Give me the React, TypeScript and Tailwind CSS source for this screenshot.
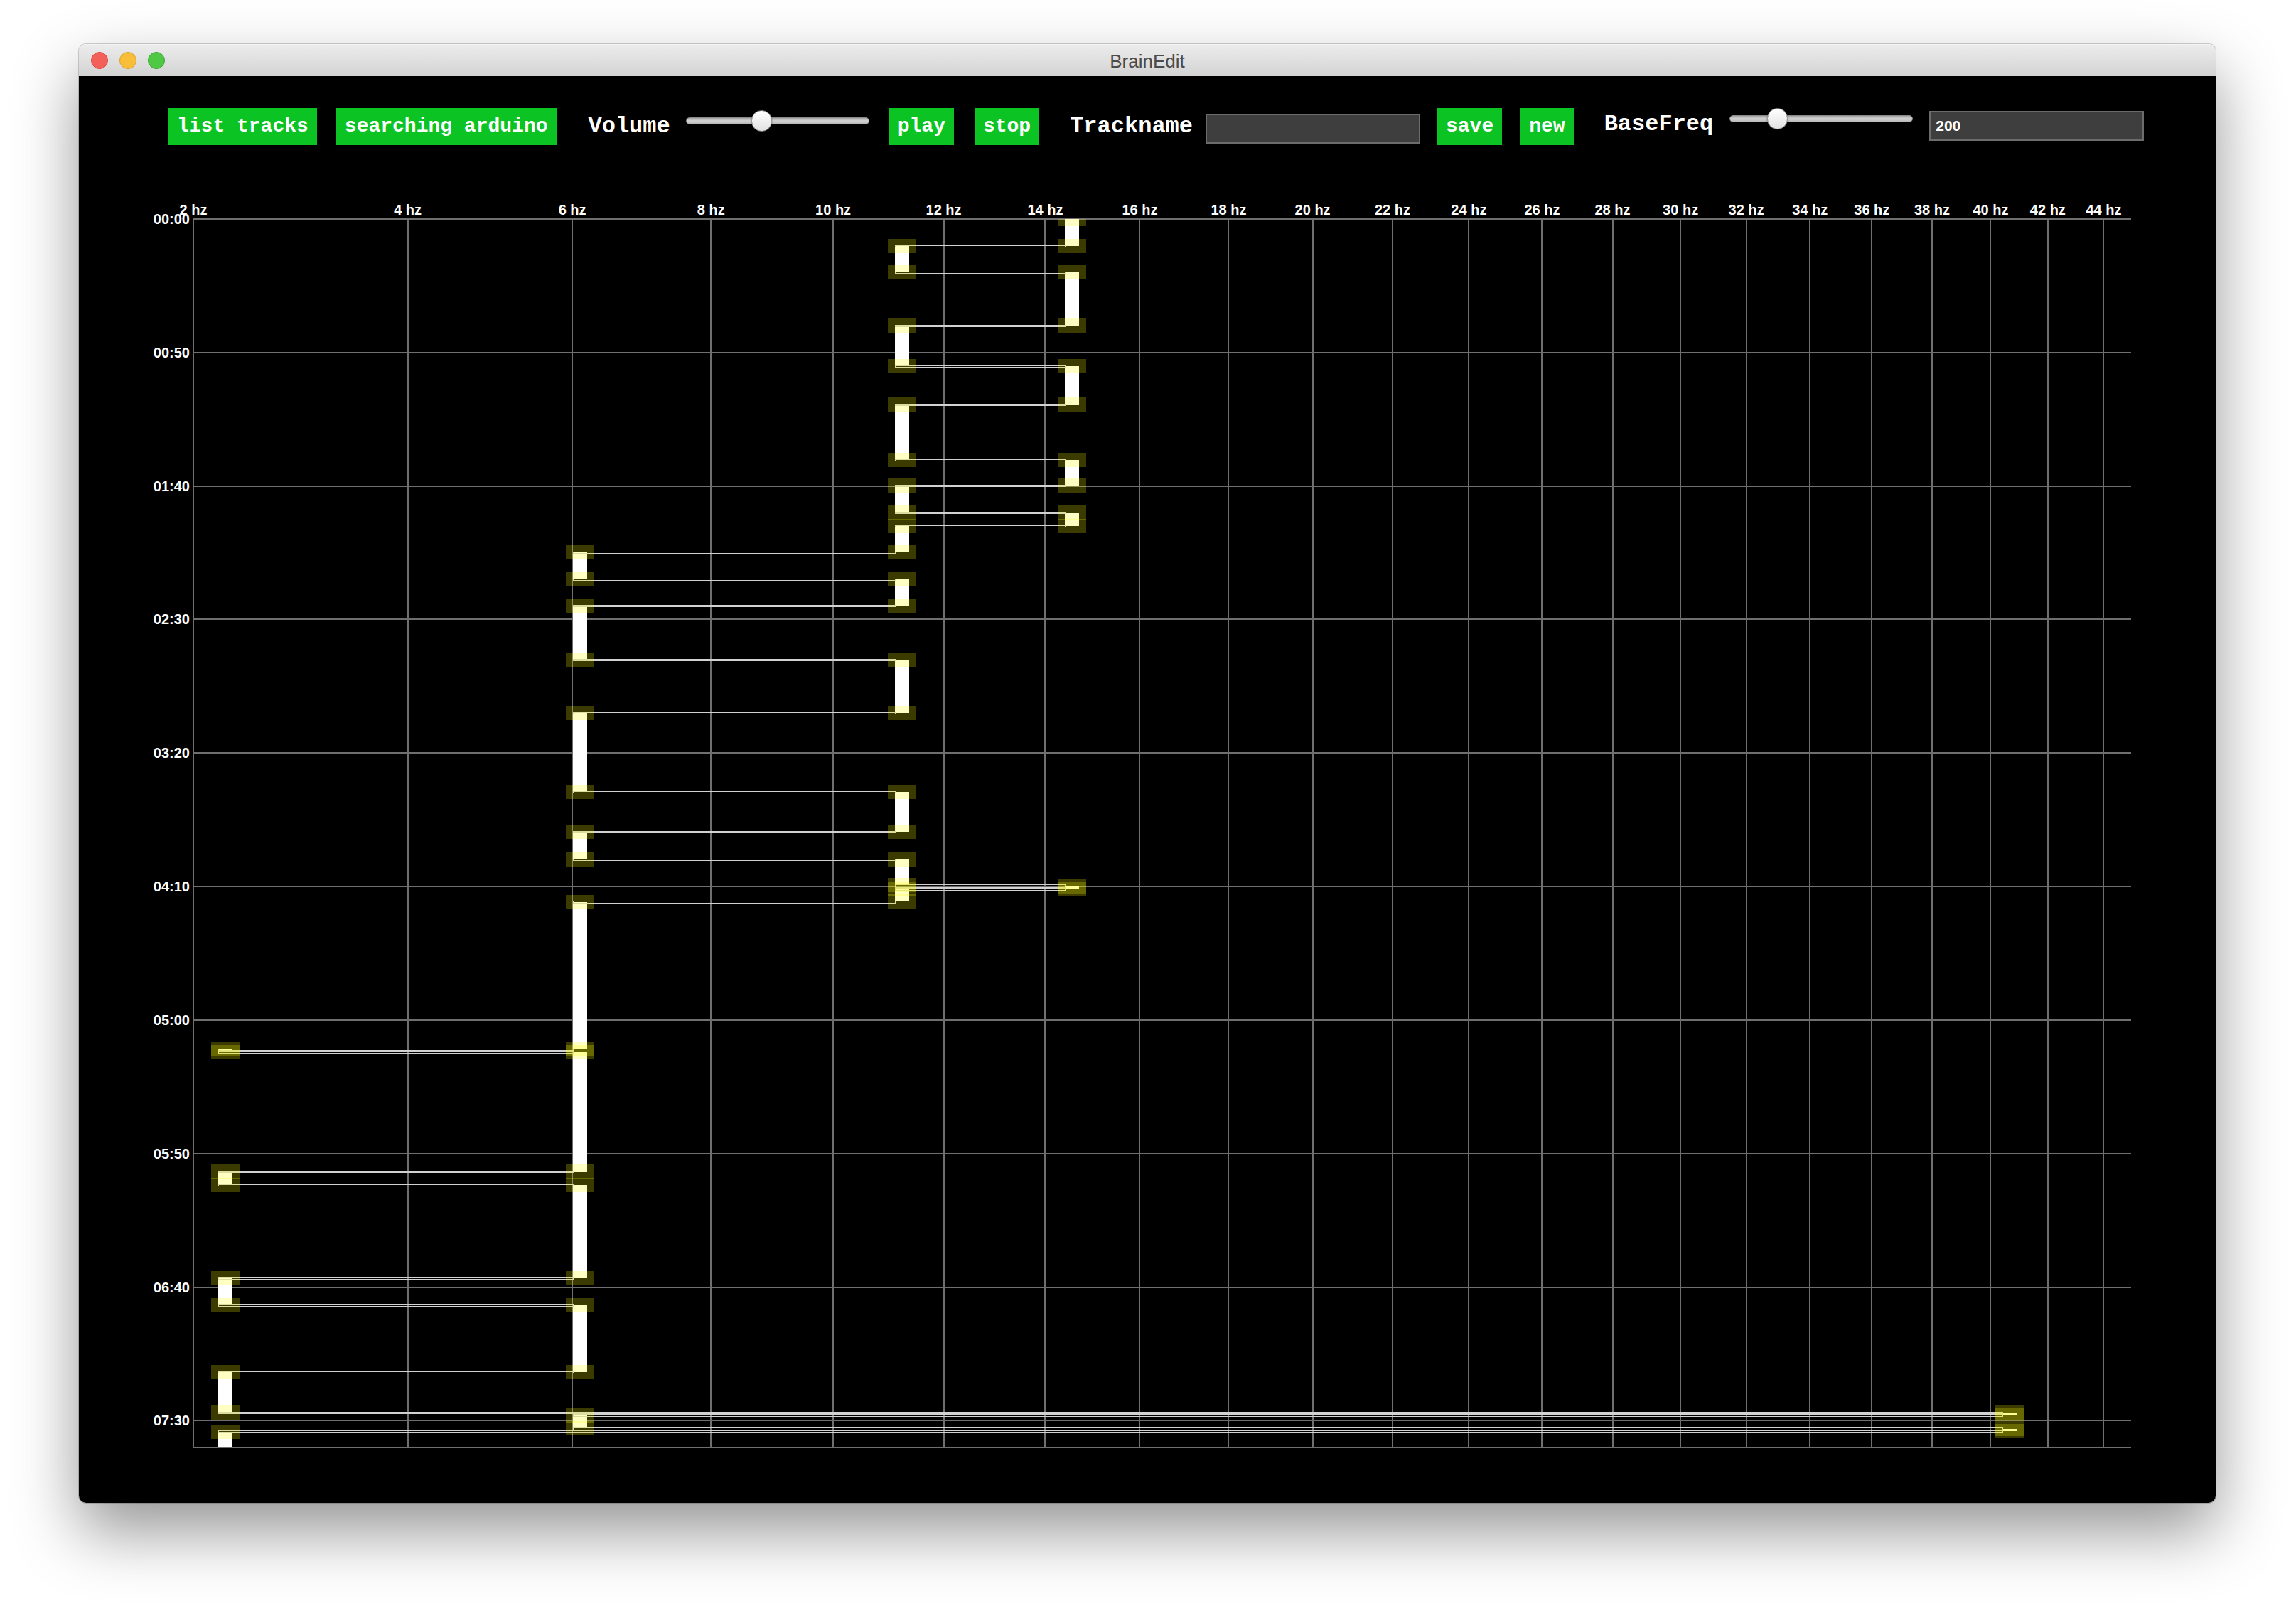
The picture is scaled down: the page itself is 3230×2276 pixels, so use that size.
import type { ReactNode } from 'react';

const CHART_W = 2726;
const CHART_H = 1728;
const TOTAL_SEC = 460;

// frequency axis is square-root scaled, 2 hz .. 45 hz
const fx = (f: number) => (CHART_W * (Math.sqrt(f) - Math.sqrt(2))) / (Math.sqrt(45) - Math.sqrt(2));
const ty = (t: number) => (t * CHART_H) / TOTAL_SEC;
const fmt = (t: number) =>
  `${String(Math.floor(t / 60)).padStart(2, '0')}:${String(t % 60).padStart(2, '0')}`;

// left edge of each tone column, px from chart left
const COLS = { A: 35, B: 534, C: 987, D: 1226, E: 2545 };
type Seg = [keyof typeof COLS, number, number];

const SEGS: Seg[] = [
  ['D', 0, 38],
  ['C', 38, 75],
  ['D', 75, 150],
  ['C', 150, 207],
  ['D', 207, 261],
  ['C', 261, 339],
  ['D', 339, 375],
  ['C', 375, 413],
  ['D', 413, 432],
  ['C', 432, 469],
  ['B', 469, 507],
  ['C', 507, 544],
  ['B', 544, 620],
  ['C', 620, 695],
  ['B', 695, 806],
  ['C', 806, 862],
  ['B', 862, 901],
  ['C', 901, 937],
  ['D', 939, 942],
  ['C', 943, 960],
  ['B', 961, 1168],
  ['A', 1168, 1172],
  ['B', 1172, 1340],
  ['A', 1340, 1359],
  ['B', 1359, 1490],
  ['A', 1490, 1528],
  ['B', 1528, 1622],
  ['A', 1622, 1679],
  ['E', 1679, 1682],
  ['B', 1683, 1701],
  ['E', 1702, 1705],
  ['A', 1706, 1760],
];

function GreenButton({ children, className = '' }: { children: ReactNode; className?: string }) {
  return (
    <button
      className={`h-[52px] shrink-0 bg-[#0bc424] px-[12px] font-['Liberation_Mono',monospace] text-[28px] font-bold leading-none text-white ${className}`}
    >
      {children}
    </button>
  );
}

function Label({ children, className = '' }: { children: ReactNode; className?: string }) {
  return (
    <span
      className={`flex shrink-0 items-center font-['Liberation_Mono',monospace] text-[32px] font-bold text-white ${className}`}
    >
      {children}
    </span>
  );
}

function Slider({ className = '', knobClass }: { className?: string; knobClass: string }) {
  return (
    <div className={`relative h-[30px] w-[258px] shrink-0 ${className}`}>
      <div className="absolute left-0 right-0 top-[10px] h-[10px] rounded-full border border-[#8a8a8a] bg-gradient-to-b from-[#a3a3a3] via-[#d4d4d4] to-[#b8b8b8]" />
      <div
        className={`absolute top-0 h-[30px] w-[29px] rounded-full border border-[#8e8e8e] bg-gradient-to-b from-white to-[#e2e2e2] shadow-[0_1px_2px_rgba(0,0,0,0.45)] ${knobClass}`}
      />
    </div>
  );
}

function Field({ value, className = '' }: { value?: string; className?: string }) {
  return (
    <div
      className={`flex h-[42px] w-[302px] shrink-0 items-center border-2 border-[#6c6c6c] bg-[#3e3e3e] pl-[7px] font-['Liberation_Sans',Arial,sans-serif] text-[21px] font-bold text-white ${className}`}
    >
      {value}
    </div>
  );
}

function Toolbar() {
  return (
    <div className="ml-[126px] mt-[45px] flex items-start">
      <GreenButton>list tracks</GreenButton>
      <GreenButton className="ml-[27px]">searching arduino</GreenButton>
      <Label className="ml-[45px] h-[52px]">Volume</Label>
      <Slider className="ml-[22px] mt-[3px]" knobClass="left-[92px]" />
      <GreenButton className="ml-[28px]">play</GreenButton>
      <GreenButton className="ml-[29px]">stop</GreenButton>
      <Label className="ml-[43px] h-[52px]">Trackname</Label>
      <Field className="ml-[18px] mt-[8px]" />
      <GreenButton className="ml-[24px]">save</GreenButton>
      <GreenButton className="ml-[26px]">new</GreenButton>
      <Label className="ml-[43px] h-[46px]">BaseFreq</Label>
      <Slider className="ml-[23px]" knobClass="left-[53px]" />
      <Field className="ml-[23px] mt-[4px]" value="200" />
    </div>
  );
}

function Chart() {
  const freqs = Array.from({ length: 22 }, (_, i) => 2 + i * 2);
  const times = Array.from({ length: 10 }, (_, i) => i * 50);

  return (
    <div className="relative ml-[161px] mt-[104px] h-[1728px] w-[2726px] font-['Liberation_Sans',Arial,sans-serif] text-[20px] font-bold leading-[20px] text-white">
      {freqs.map((f) => (
        <div key={f} className="absolute top-[-23px] -translate-x-1/2 whitespace-nowrap" style={{ left: fx(f) }}>
          {f} hz
        </div>
      ))}
      {times.map((t) => (
        <div key={t} className="absolute right-[calc(100%+5px)] -translate-y-1/2 whitespace-nowrap" style={{ top: ty(t) }}>
          {fmt(t)}
        </div>
      ))}

      {freqs.map((f) => (
        <div key={f} className="absolute bottom-0 top-0 w-[2px] bg-[#6f6f6f]" style={{ left: fx(f) - 1 }} />
      ))}
      {times.map((t) => (
        <div key={t} className="absolute left-0 right-0 h-[2px] bg-[#6f6f6f]" style={{ top: ty(t) - 1 }} />
      ))}
      <div className="absolute bottom-[-1px] left-0 right-0 h-[2px] bg-[#6f6f6f]" />

      <div className="absolute inset-0 overflow-hidden">
        {SEGS.map(([c, y0, y1], i) => (
          <div
            key={`bar${i}`}
            className="absolute w-[20px] bg-white"
            style={{ left: COLS[c], top: y0, height: y1 - y0 }}
          />
        ))}
        {SEGS.slice(1).map(([c, y0], i) => {
          const [pc, , py1] = SEGS[i];
          const a = COLS[pc];
          const b = COLS[c];
          return (
            <div
              key={`link${i}`}
              className="absolute border border-[#d2d2d2]"
              style={{ left: Math.min(a, b), width: Math.abs(b - a) + 1, top: py1 - 1, height: y0 - py1 + 3 }}
            />
          );
        })}
        {SEGS.flatMap(([c, y0, y1], i) =>
          [y0, y1].map((y, k) => (
            <div
              key={`h${i}-${k}`}
              className="absolute h-[20px] w-[40px] bg-[rgba(255,255,0,0.23)]"
              style={{ left: COLS[c] - 10, top: y - 10 }}
            />
          )),
        )}
      </div>
    </div>
  );
}

export default function App() {
  return (
    <div className="h-[2276px] w-[3230px] bg-white pl-[111px] pt-[62px]">
      <div className="flex h-[2052px] w-[3006px] flex-col overflow-hidden rounded-[10px] shadow-[0_40px_90px_rgba(0,0,0,0.42),0_0_0_1px_rgba(0,0,0,0.18)]">
        <div className="grid h-[45px] shrink-0 grid-cols-[1fr_auto_1fr] items-center border-t border-[#f4f4f4] bg-gradient-to-b from-[#ececec] to-[#d3d3d3]">
          <div className="flex items-center gap-[16px] pl-[17px]">
            <span className="h-[24px] w-[24px] rounded-full border border-[#e0463f] bg-[#f3605a]" />
            <span className="h-[24px] w-[24px] rounded-full border border-[#dfa026] bg-[#f9be39]" />
            <span className="h-[24px] w-[24px] rounded-full border border-[#3ca532] bg-[#4fc843]" />
          </div>
          <span className="pt-[2px] font-['Liberation_Sans',Arial,sans-serif] text-[26px] text-[#4b4b4b]">BrainEdit</span>
          <div />
        </div>
        <div className="flex-1 bg-black">
          <Toolbar />
          <Chart />
        </div>
      </div>
    </div>
  );
}
